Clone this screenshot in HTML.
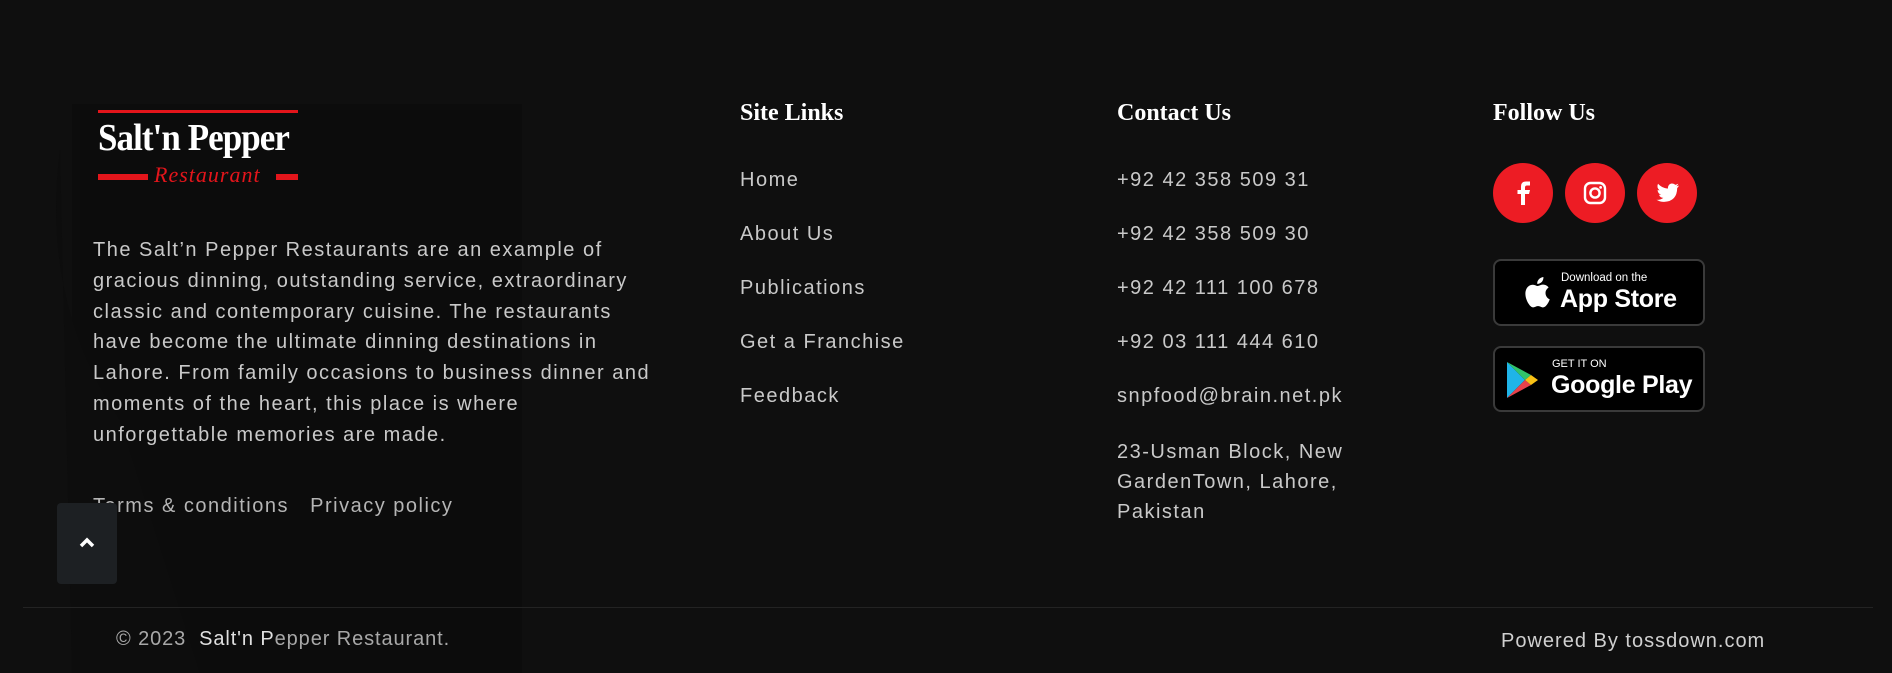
<!DOCTYPE html>
<html><head><meta charset="utf-8"><style>
*{margin:0;padding:0;box-sizing:border-box}
body{width:1892px;height:673px;background:#0f0f0f;font-family:"Liberation Sans",sans-serif;color:#c9c9c9;position:relative;overflow:hidden}
.a{position:absolute;white-space:nowrap}
.h{font-family:"Liberation Serif",serif;font-weight:bold;color:#fff;font-size:24px}
.l{font-size:20px;color:#c9c9c9;letter-spacing:1.5px}
.c{position:absolute;width:60px;height:60px;border-radius:50%;background:#ed1c24;top:163px}
.badge{position:absolute;left:1493px;width:212px;background:#000;border:2px solid #3a3a3a;border-radius:8px;color:#fff}
</style></head><body>
<svg class="a" style="left:0;top:0" width="1892" height="673">
<path d="M72 104 H522 V673 H72 Z" fill="#0c0c0c"/>
<path d="M60 150 Q40 300 120 420 L200 673 H72 Z" fill="#0d0d0d"/>
<line x1="23" y1="607.5" x2="1873" y2="607.5" stroke="#232323" stroke-width="1"/>
</svg>
<div class="a" style="left:98px;top:110px;width:200px;height:3px;background:#e3151b"></div>
<div class="a" style="left:98px;top:116px;font-family:'Liberation Serif',serif;font-weight:bold;font-size:38px;color:#fff;letter-spacing:-1px;transform:scaleX(.92);transform-origin:left">Salt'n Pepper</div>
<div class="a" style="left:98px;top:174px;width:50px;height:6px;background:#e3151b"></div>
<div class="a" style="left:154px;top:162px;font-family:'Liberation Serif',serif;font-style:italic;font-size:22px;letter-spacing:1px;color:#e3151b">Restaurant</div>
<div class="a" style="left:276px;top:174px;width:22px;height:6px;background:#e3151b"></div>
<div class="a l" style="left:93px;top:235px;line-height:30.8px;white-space:normal;width:700px">The Salt’n Pepper Restaurants are an example of<br>gracious dinning, outstanding service, extraordinary<br>classic and contemporary cuisine. The restaurants<br>have become the ultimate dinning destinations in<br>Lahore. From family occasions to business dinner and<br>moments of the heart, this place is where<br>unforgettable memories are made.</div>
<div class="a l" style="left:93px;top:495px;color:#b5b5b5">Terms &amp; conditions&nbsp;&nbsp;&nbsp;Privacy policy</div>
<div class="a" style="left:57px;top:503px;width:60px;height:81px;background:#1d2023;border-radius:4px"></div>
<svg class="a" style="left:78px;top:537px" width="18" height="12"><path d="M3 9 L9 3 L15 9" stroke="#fff" stroke-width="3.5" fill="none"/></svg>
<div class="a h" style="left:740px;top:100px">Site Links</div>
<div class="a l" style="left:740px;top:169px">Home</div>
<div class="a l" style="left:740px;top:223px">About Us</div>
<div class="a l" style="left:740px;top:277px">Publications</div>
<div class="a l" style="left:740px;top:331px">Get a Franchise</div>
<div class="a l" style="left:740px;top:385px">Feedback</div>
<div class="a h" style="left:1117px;top:100px">Contact Us</div>
<div class="a l" style="left:1117px;top:169px">+92 42 358 509 31</div>
<div class="a l" style="left:1117px;top:223px">+92 42 358 509 30</div>
<div class="a l" style="left:1117px;top:277px">+92 42 111 100 678</div>
<div class="a l" style="left:1117px;top:331px">+92 03 111 444 610</div>
<div class="a l" style="left:1117px;top:385px">snpfood@brain.net.pk</div>
<div class="a l" style="left:1117px;top:437px;line-height:30px">23-Usman Block, New<br>GardenTown, Lahore,<br>Pakistan</div>
<div class="a h" style="left:1493px;top:100px">Follow Us</div>
<div class="c" style="left:1493px"><svg width="60" height="60"><path d="M32 42 V31 H36 L37 27 H32 V24.5 Q32 22.5 34 22.5 H37 V18.5 H33 Q28 18.5 28 23.5 V27 H24.5 V31 H28 V42 Z" fill="#fff"/></svg></div>
<div class="c" style="left:1565px"><svg width="60" height="60"><rect x="20" y="20" width="20" height="20" rx="5.5" fill="none" stroke="#fff" stroke-width="2.4"/><circle cx="30" cy="30" r="4.6" fill="none" stroke="#fff" stroke-width="2.4"/><circle cx="35.6" cy="24.4" r="1.4" fill="#fff"/></svg></div>
<div class="c" style="left:1637px"><svg width="60" height="60"><path d="M42 22.5 Q40.6 23.2 39.3 23.3 Q40.8 22.4 41.3 20.8 Q39.9 21.6 38.4 21.9 Q36.8 20.3 34.6 20.5 Q31 21 30.8 25.6 Q25 25.3 21 20.8 Q19.3 24.6 22.6 27.4 Q21.5 27.4 20.6 26.9 Q20.7 30.5 24 31.6 Q23 31.9 22 31.7 Q23 34.6 26.3 34.9 Q23.3 37.2 19.5 36.8 Q23 39 27.1 38.9 Q40 38.3 40.2 25 Q41.3 24 42 22.5 Z" fill="#fff"/></svg></div>
<div class="badge" style="top:259px;height:67px">
<svg class="a" style="left:26px;top:13px" width="30" height="36" viewBox="0 0 24 28"><path d="M19.6 14.9c0-3 2.4-4.4 2.5-4.5-1.4-2-3.5-2.3-4.300-2.3-1.8-.2-3.6 1.100-4.5 1.100-.9 0-2.400-1.100-3.900-1-2 0-3.900 1.200-4.900 3-2.100 3.700-.5 9.100 1.500 12.100 1 1.500 2.200 3.100 3.800 3 1.500-.1 2.100-1 3.900-1 1.800 0 2.300 1 3.900 1 1.600 0 2.700-1.500 3.700-3 1.200-1.700 1.600-3.300 1.700-3.400-.1 0-3.300-1.300-3.400-5zM16.700 5.900c.8-1 1.400-2.400 1.200-3.900-1.200.1-2.700.8-3.600 1.800-.8.9-1.500 2.300-1.300 3.700 1.400.1 2.800-.7 3.700-1.600z" fill="#fff"/></svg>
<div class="a" style="left:66px;top:11px;font-size:11.5px">Download on the</div>
<div class="a" style="left:65px;top:24px;font-size:25px;font-weight:bold;letter-spacing:-.3px">App Store</div>
</div>
<div class="badge" style="top:346px;height:66px">
<svg class="a" style="left:10px;top:13px" width="34" height="38" viewBox="0 0 34 38"><path d="M2 1 L20 19 L2 37 Z" fill="#1fb4e8"/><path d="M2 1 L26 14 L20 19 Z" fill="#31c46a"/><path d="M2 37 L20 19 L26 24 Z" fill="#e8414b"/><path d="M20 19 L26 14 L33 19 L26 24 Z" fill="#f8c115"/></svg>
<div class="a" style="left:57px;top:10px;font-size:11px">GET IT ON</div>
<div class="a" style="left:56px;top:23px;font-size:25px;font-weight:bold;letter-spacing:-.3px">Google Play</div>
</div>
<div class="a l" style="left:116px;top:628px;color:#a8a8a8;letter-spacing:.9px">© 2023 &nbsp;<span style="color:#e0e0e0">Salt'n P</span>epper Restaurant.</div>
<div class="a l" style="left:1501px;top:630px;color:#d0d0d0;letter-spacing:1px">Powered By tossdown.com</div>
</body></html>
